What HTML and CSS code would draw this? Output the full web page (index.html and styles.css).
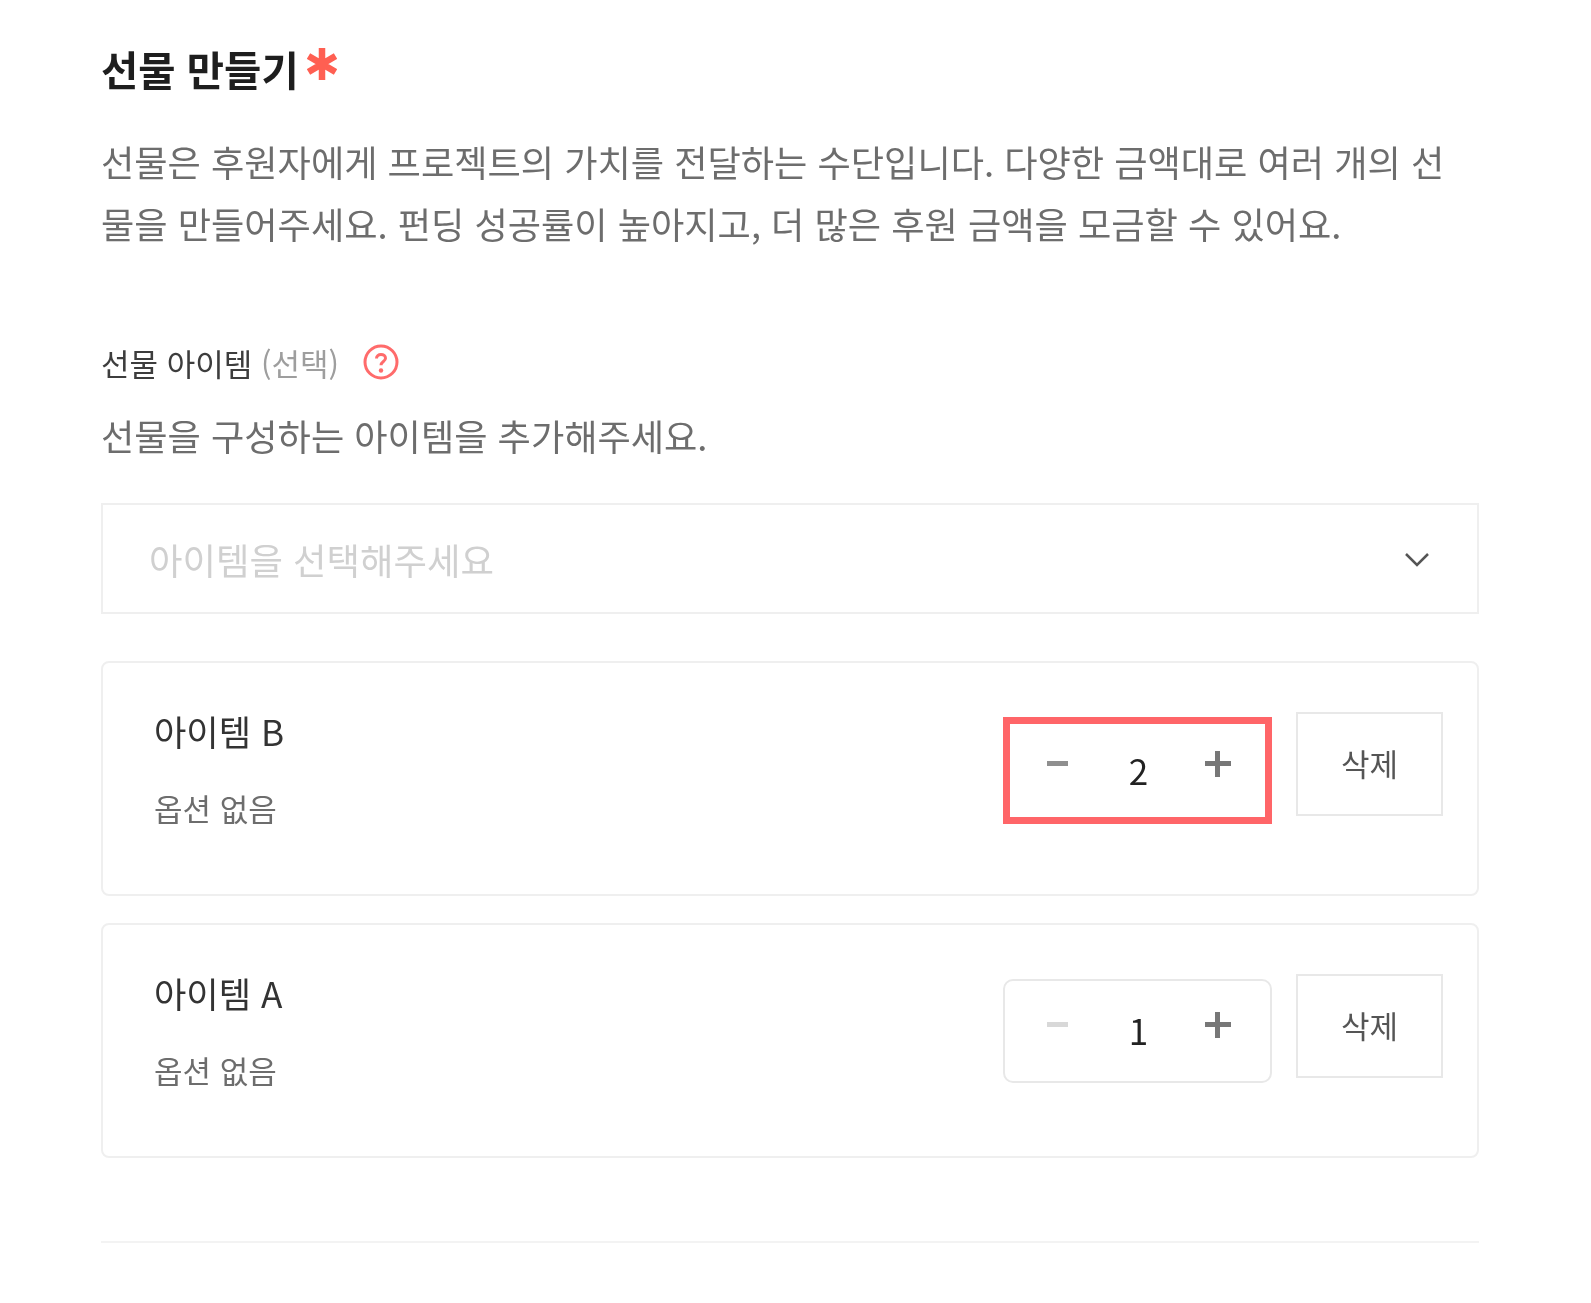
FILE: index.html
```html
<!DOCTYPE html>
<html lang="ko">
<head>
  <meta charset="UTF-8">
  <title>선물 만들기</title>
  <link rel="stylesheet" href="styles.css">
</head>
<body>
  <section class="panel">
    <h2 class="title">선물 만들기
      <svg class="star" viewBox="0 0 30 32" width="30" height="32">
        <path d="M15 0v32M1.5 8l27 16M28.500 8l-27 16" fill="none" stroke="#ff5f52" stroke-width="6.500"/>
      </svg>
    </h2>
    <p class="desc">선물은 후원자에게 프로젝트의 가치를 전달하는 수단입니다. 다양한 금액대로 여러 개의 선<br>물을 만들어주세요. 펀딩 성공률이 높아지고, 더 많은 후원 금액을 모금할 수 있어요.</p>

    <div class="label-row">
      <span class="label">선물 아이템 <span class="optional">(선택)</span></span>
      <svg class="help" viewBox="0 0 36 36" width="36" height="36">
        <circle cx="18" cy="18" r="16" fill="none" stroke="#ff6b6b" stroke-width="3"/>
        <path d="M13.500 14.500c0-2.500 2-4 4.500-4s4.500 1.500 4.500 3.800c0 3.200-4.500 3.200-4.500 7" fill="none" stroke="#ff6b6b" stroke-width="3"/>
        <circle cx="18" cy="26.500" r="2.200" fill="#ff6b6b"/>
      </svg>
    </div>
    <p class="hint">선물을 구성하는 아이템을 추가해주세요.</p>

    <div class="select">
      <span class="placeholder">아이템을 선택해주세요</span>
      <svg class="chevron" viewBox="0 0 26 16" width="26" height="16">
        <path d="M2 3l11 11L24 3" fill="none" stroke="#555" stroke-width="2.500"/>
      </svg>
    </div>

    <div class="item">
      <div class="item-info">
        <div class="item-name">아이템 B</div>
        <div class="item-option">옵션 없음</div>
      </div>
      <div class="stepper focused">
        <span class="minus"></span>
        <span class="count">2</span>
        <span class="plus"></span>
      </div>
      <button class="delete">삭제</button>
    </div>

    <div class="item">
      <div class="item-info">
        <div class="item-name">아이템 A</div>
        <div class="item-option">옵션 없음</div>
      </div>
      <div class="stepper">
        <span class="minus disabled"></span>
        <span class="count">1</span>
        <span class="plus"></span>
      </div>
      <button class="delete">삭제</button>
    </div>

    <hr class="divider">
  </section>
</body>
</html>
```

FILE: styles.css
```css
* {
  margin: 0;
  padding: 0;
  box-sizing: border-box;
}

body {
  background-color: #fff;
  color: #1e1e1e;
  font-family: "Noto Sans CJK KR", "Noto Sans", sans-serif;
}

.panel {
  width: 1378px;
  margin-left: 101px;
  padding-top: 40px;
  filter: blur(0.5px);
}

.title {
  display: flex;
  align-items: flex-start;
  gap: 8px;
  height: 57px;
  font-size: 40.5px;
  line-height: 57px;
  font-weight: 700;
  color: #1e1e1e;
}

.star {
  margin-top: 8px;
}

.desc {
  margin-top: 33px;
  font-size: 36.200px;
  line-height: 62px;
  color: #6d6d6d;
  white-space: nowrap;
}

.label-row {
  display: flex;
  align-items: center;
  gap: 24px;
  margin-top: 88px;
  height: 40px;
}

.label {
  font-size: 31px;
  color: #3d3d3d;
}

.optional {
  color: #9e9e9e;
}

.hint {
  margin-top: 28px;
  font-size: 36.200px;
  line-height: 50px;
  color: #6d6d6d;
}

.select {
  display: flex;
  align-items: center;
  justify-content: space-between;
  height: 111px;
  margin-top: 43px;
  padding: 0 47px 0 46px;
  border: 2px solid #efefef;
}

.placeholder {
  font-size: 36.400px;
  color: #d0d0d0;
}

.item {
  display: flex;
  align-items: flex-start;
  height: 235px;
  margin-top: 47px;
  padding: 49px 34px 0 51px;
  border: 2px solid #efefef;
  border-radius: 8px;
}

.item + .item {
  margin-top: 27px;
}

.item-info {
  flex: 1;
  margin-top: -1px;
}

.item-name {
  font-size: 35.200px;
  line-height: 40px;
  color: #333;
}

.item-option {
  margin-top: 37px;
  font-size: 31px;
  line-height: 40px;
  color: #6d6d6d;
}

.stepper {
  display: flex;
  align-items: center;
  justify-content: space-between;
  width: 269px;
  height: 104px;
  margin: 5px 24px 0 0;
  padding: 0 39px 0 42px;
  border: 2px solid #e8e8e8;
  border-radius: 10px;
}

.stepper.focused {
  height: 107px;
  border: 7px solid #ff6568;
  border-radius: 0;
  padding: 0 34px 0 37px;
}

.minus {
  width: 21px;
  height: 5px;
  background-color: #8f8f8f;
  margin-bottom: 14px;
}

.minus.disabled {
  background-color: #d8d8d8;
}

.plus {
  position: relative;
  width: 26px;
  height: 26px;
  margin-bottom: 13px;
}

.plus::before,
.plus::after {
  content: "";
  position: absolute;
  background-color: #777;
}

.plus::before {
  left: 0;
  right: 0;
  top: 10px;
  height: 5px;
}

.plus::after {
  top: 0;
  bottom: 0;
  left: 10px;
  width: 5px;
}

.count {
  font-size: 35px;
  color: #222;
  margin: -3px 0 0 4px;
}

.delete {
  width: 147px;
  height: 104px;
  background-color: #fff;
  border: 2px solid #e8e8e8;
  font-family: inherit;
  font-size: 31px;
  color: #555;
  padding-bottom: 4px;
}

.divider {
  margin-top: 83px;
  border: none;
  border-top: 2px solid #f3f3f3;
}
```
